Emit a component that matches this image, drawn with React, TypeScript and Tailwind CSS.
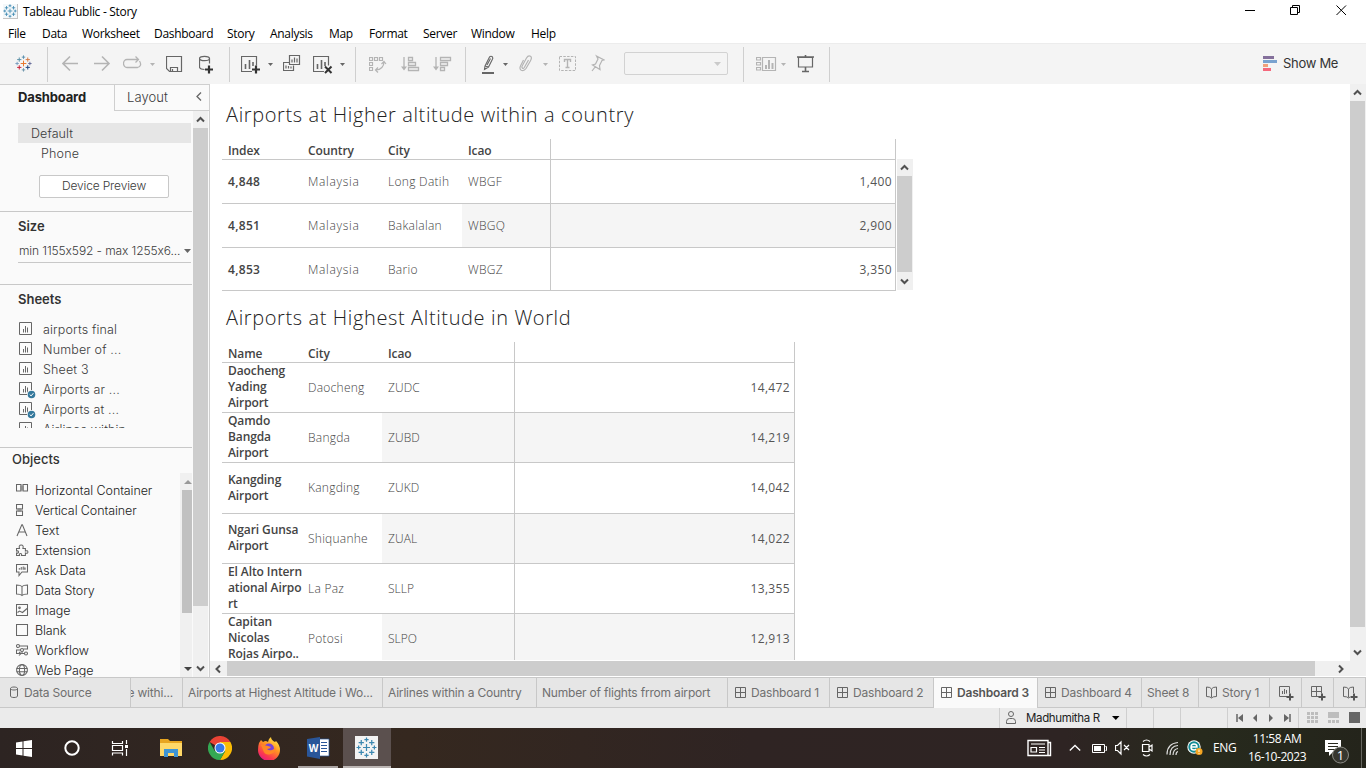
import React from "react";

type Kids = { children?: React.ReactNode };

const Svg = ({ w, h, children, className = "" }: { w: number; h: number; className?: string } & Kids) => (
  <svg width={w} height={h} viewBox={`0 0 ${w} ${h}`} fill="none" className={`block shrink-0 ${className}`}>
    {children}
  </svg>
);

const Chevron = ({ dir, color = "#505050" }: { dir: "up" | "down" | "left" | "right"; color?: string }) => {
  const d = {
    up: "M4 10.500 7.500 7l3.500 3.500",
    down: "M4 6.500 7.500 10l3.500-3.500",
    left: "M10 4.500 6.500 8 10 11.500",
    right: "M6 4.500 9.500 8 6 11.500",
  }[dir];
  return (
    <Svg w={16} h={17}>
      <path d={d} stroke={color} strokeWidth="2" />
    </Svg>
  );
};

const Sparkle = ({ size, mono }: { size: number; mono?: boolean }) => {
  const blue = "#3b87b0";
  const pts: [number, number, number, string][] = [
    [12, 12, 4, "#e8762c"],
    [12, 3, 2.4, "#5c92b0"],
    [12, 21, 2.4, "#7098ad"],
    [3, 12, 2.4, "#7b9fc0"],
    [21, 12, 2.4, "#6a6f9c"],
    [6, 6.5, 3, "#5c92a8"],
    [18, 6.5, 3, "#d77a45"],
    [6, 17.5, 3, "#c72037"],
    [18, 17.5, 3, "#1f447e"],
  ];
  return (
    <svg width={size} height={size} viewBox="0 0 24 24" fill="none" className="block shrink-0">
      {pts.map(([x, y, r, c], i) => (
        <path key={i} d={`M${x - r} ${y}h${r * 2}M${x} ${y - r}v${r * 2}`} stroke={mono ? blue : c} strokeWidth="1.4" />
      ))}
    </svg>
  );
};

/* ---------- window header ---------- */

const menus: [string, string][] = [
  ["File", "w-[34px]"],
  ["Data", "w-[40px]"],
  ["Worksheet", "w-[72px]"],
  ["Dashboard", "w-[73px]"],
  ["Story", "w-[43px]"],
  ["Analysis", "w-[59px]"],
  ["Map", "w-[40px]"],
  ["Format", "w-[54px]"],
  ["Server", "w-[48px]"],
  ["Window", "w-[60px]"],
  ["Help", "w-[40px]"],
];

const TitleBar = () => (
  <div className="flex h-6 items-start bg-white">
    <div className="ml-[3px] mt-1 flex h-[15px] w-[15px] items-center justify-center border-b border-r border-[#c4c4c4] bg-[#f4f8fa]">
      <Sparkle size={14} mono />
    </div>
    <span className="ml-[5px] mt-[3px] grow whitespace-nowrap text-[12px] leading-[18px] tracking-[-0.3px] text-black">Tableau Public - Story</span>
    <Svg w={121} h={22}>
      <path d="M0 10.500h10M45.500 7.500h7v7h-7zM47.500 7.500v-2h7v7h-2M91.500 5.500l9.500 9.500M101 5.500l-9.500 9.500" stroke="#000" strokeWidth="1" />
    </Svg>
  </div>
);

const MenuBar = () => (
  <div className="flex h-[19px] bg-white pl-2">
    {menus.map(([m, w]) => (
      <span key={m} className={`${w} whitespace-nowrap text-[12px] leading-[19px] tracking-[-0.3px] text-black`}>
        {m}
      </span>
    ))}
  </div>
);

/* ---------- toolbar ---------- */

const DK = "#666666";
const LT = "#b4b4b4";
const Slot = ({ w, children }: { w: string } & Kids) => <div className={`${w} shrink-0 pt-2`}>{children}</div>;
const Sep = ({ w }: { w: string }) => (
  <div className={`${w} shrink-0 pt-[3px]`}>
    <div className="h-[35px] w-px bg-[#cfcfcf]" />
  </div>
);
const Caret = ({ w, c }: { w: string; c: string }) => (
  <Slot w={w}>
    <Svg w={6} h={24}>
      <path d="M0 11h5L2.500 14z" fill={c} />
    </Svg>
  </Slot>
);

const Toolbar = () => (
  <div className="flex h-[41px] border-t border-[#ececec] bg-[#f4f4f4] pl-[15px]">
    <div className="w-8 shrink-0 pt-[11px]">
      <Sparkle size={17} />
    </div>
    <Sep w="w-[15px]" />
    <Slot w="w-8">
      <Svg w={17} h={24}>
        <path d="M16 11.500H1M8 4.500l-7 7 7 7" stroke={LT} strokeWidth="1.6" />
      </Svg>
    </Slot>
    <Slot w="w-[29px]">
      <Svg w={17} h={24}>
        <path d="M0 11.500h15M8 4.500l7 7-7 7" stroke={LT} strokeWidth="1.6" />
      </Svg>
    </Slot>
    <Slot w="w-[27px]">
      <Svg w={19} h={24}>
        <path d="M11.500 15.500H4a3.500 4 0 0 1 0-8h11M16.500 9q3 5-2 6.500H9M12.500 4.500l3 3-3 3" stroke={LT} strokeWidth="1.3" />
      </Svg>
    </Slot>
    <Caret w="w-4" c={LT} />
    <Slot w="w-[33px]">
      <Svg w={17} h={24}>
        <path d="M.5 4.500h15v15H3.500l-3-3zM4.500 19.500v-4h7v4M6.500 17v2" stroke={DK} strokeWidth="1.200" />
      </Svg>
    </Slot>
    <Slot w="w-[30px]">
      <Svg w={16} h={24}>
        <ellipse cx="5.500" cy="6.500" rx="5" ry="2.200" stroke={DK} strokeWidth="1.200" />
        <path d="M.5 6.500v9q1 2 5 2M10.500 6.500v5" stroke={DK} strokeWidth="1.200" />
        <path d="M6 17.500h8M10 13.500v8" stroke="#333" strokeWidth="2.200" />
      </Svg>
    </Slot>
    <Sep w="w-3" />
    <Slot w="w-[27px]">
      <Svg w={20} h={24}>
        <path d="M11 19.500H.5v-15h15v9" stroke={DK} strokeWidth="1.200" />
        <path d="M4.500 12v5M8.500 8v9M12 10v4" stroke={DK} strokeWidth="1.600" />
        <path d="M11 17.500h8M15 13.500v8" stroke="#333" strokeWidth="2.200" />
      </Svg>
    </Slot>
    <Caret w="w-[15px]" c={DK} />
    <Slot w="w-[30px]">
      <Svg w={18} h={24}>
        <path d="M6.500 3.500h10v9h-10zM6 10.500H.5v8h10v-5M3 13.500v3M5.500 14v2.500M8 14.500v2M9 7.500v3M11.500 5.500v5M14 6.500v4" stroke={DK} strokeWidth="1.200" />
      </Svg>
    </Slot>
    <Slot w="w-[27px]">
      <Svg w={20} h={24}>
        <path d="M11 19.500H.5v-15h15v9" stroke={DK} strokeWidth="1.200" />
        <path d="M4.500 12v5M8.500 8v9M12 10v4" stroke={DK} strokeWidth="1.600" />
        <path d="m12 14.500 6.500 6.500M18.500 14.500 12 21" stroke="#333" strokeWidth="2" />
      </Svg>
    </Slot>
    <Caret w="w-[15px]" c={DK} />
    <Sep w="w-[14px]" />
    <Slot w="w-8">
      <Svg w={18} h={24}>
        <path d="M.5 5.500h3v3h-3zM5.500 5.500h3v3h-3zM10.500 5.500h3v3h-3zM.5 10.500h3v3h-3zM.5 15.500h3v3h-3zM7 18c5 0 8-4 8-8M12.500 12l2.500-2.500 2 2.500M9 15.500 6.500 18 9 20.500" stroke={LT} strokeWidth="1.200" />
      </Svg>
    </Slot>
    <Slot w="w-8">
      <Svg w={19} h={24}>
        <path d="M3 5v12M7.500 5.500h4v3h-4zM7.500 10.500h7v3h-7zM7.500 15.500h10v3h-10z" stroke={LT} strokeWidth="1.300" />
        <path d="M0 14.500h6l-3 4z" fill={LT} />
      </Svg>
    </Slot>
    <Slot w="w-8">
      <Svg w={19} h={24}>
        <path d="M3 5v12M7.500 5.500h10v3h-10zM7.500 10.500h7v3h-7zM7.500 15.500h4v3h-4z" stroke={LT} strokeWidth="1.300" />
        <path d="M0 14.500h6l-3 4z" fill={LT} />
      </Svg>
    </Slot>
    <Sep w="w-[17px]" />
    <Slot w="w-[21px]">
      <Svg w={13} h={24}>
        <path d="m3 14 4.500-9q1.500-1.500 3 0 .8 1-.2 2.500L6.500 15l-4 2.500zM3 14l3.500 1M8.500 6.500 5 13" stroke={DK} strokeWidth="1.100" />
        <path d="M0 21h12" stroke={DK} strokeWidth="2" />
      </Svg>
    </Slot>
    <Caret w="w-4" c={DK} />
    <Slot w="w-6">
      <Svg w={14} h={24}>
        <path d="m9.500 8-4.200 7.500q-1 1.500-2 .5-.8-1 0-2.300L7.500 6q1.800-3 4-1.700 1.800 1.400 0 4.400L7 16.500q-2.200 3-4.800 1.700-2.200-1.500-.5-4.700L4.500 8" stroke={LT} strokeWidth="1.200" />
      </Svg>
    </Slot>
    <Caret w="w-4" c={LT} />
    <Slot w="w-8">
      <Svg w={18} h={24}>
        <rect x=".5" y="4.500" width="16" height="14" stroke={LT} strokeDasharray="2.500 1.300" />
        <path d="M5.500 10V7.500h6V10M8.500 7.500v8M6.500 15.500h4" stroke={LT} strokeWidth="1.400" />
      </Svg>
    </Slot>
    <Slot w="w-[33px]">
      <Svg w={14} h={24}>
        <path d="m5.500 4 7.500 4-2 .5-2.500 5 .5 4-7.500-4.500 3-1L7 7zM4.500 14.500 1 19" stroke={LT} strokeWidth="1.200" />
      </Svg>
    </Slot>
    <div className="w-[119px] shrink-0 pt-[8px]">
      <div className="flex h-[23px] w-[104px] items-center justify-end rounded-[2px] border border-[#d2d2d2] pr-[5px]">
        <Svg w={8} h={4}>
          <path d="M0 0h7L3.500 4z" fill="#cacaca" />
        </Svg>
      </div>
    </div>
    <Sep w="w-[13px]" />
    <Slot w="w-[25px]">
      <Svg w={21} h={24}>
        <path d="M.5 5.500h4v2.500h-4zM.5 10.500h4v2.500h-4zM.5 15.500h4V18h-4zM6.500 5.500h13v13h-13z" stroke={LT} strokeWidth="1.200" />
        <path d="M10 13v4M13 8v9M16.500 11v6" stroke={LT} strokeWidth="2" />
      </Svg>
    </Slot>
    <Caret w="w-4" c={LT} />
    <Slot w="w-8">
      <Svg w={18} h={24}>
        <path d="M0 5h17M8.500 3v2M8.500 15v5M5 19.500h7" stroke={DK} strokeWidth="1.600" />
        <path d="M1.500 5.500h14v9.500h-14z" stroke={DK} strokeWidth="1.200" />
      </Svg>
    </Slot>
    <Sep w="w-[434px]" />
    <Slot w="w-5">
      <Svg w={15} h={24}>
        <path d="M0 4h11v3H0z" fill="#84709b" />
        <path d="M0 8h14v3H0z" fill="#79a2cf" />
        <path d="M0 12h5v3H0z" fill="#f0a07a" />
        <path d="M0 16h8v3H0z" fill="#f5687c" />
      </Svg>
    </Slot>
    <span className="whitespace-nowrap font-['Inter','Liberation_Sans',sans-serif] text-[13px] leading-[39px] tracking-[-0.3px] text-[#333]">Show Me</span>
  </div>
);

/* ---------- left panel ---------- */

const sheets: [string, boolean][] = [
  ["airports final", false],
  ["Number of ...", false],
  ["Sheet 3", false],
  ["Airports ar ...", true],
  ["Airports at ...", true],
  ["Airlines within", false],
];

const SheetIcon = ({ used }: { used: boolean }) => (
  <Svg w={17} h={17}>
    <path d="M.5.500h12v12H.500z" stroke={DK} />
    <path d="M4.500 7v3.500M6.500 4v6.500M8.500 5.500v5" stroke={DK} />
    {used && (
      <>
        <circle cx="12.500" cy="12.500" r="4.500" fill="#fafafa" />
        <circle cx="12.500" cy="12.500" r="3.800" fill="#34789c" />
        <path d="m10.700 12.500 1.400 1.400 2.300-2.700" stroke="#fff" />
      </>
    )}
  </Svg>
);

const objects: [string, React.ReactNode][] = [
  ["Horizontal Container", <g key="a"><path d="M4 1.500h4v5H4z" fill="#bbb" stroke="none" /><path d="M.5.500h4.500v6.500h-4.500zM7 .500h4.500v6.500h-4.500z" /></g>],
  ["Vertical Container", <g key="b"><path d="M1.500 4h4v4h-4z" fill="#bbb" stroke="none" /><path d="M.5.500h6v4.500h-6zM.5 7h6v4.500h-6z" /></g>],
  ["Text", <path key="c" d="M1 12 5.800.8h.6L11 12M2.800 8h6.500" />],
  ["Extension", <path key="d" d="M.5 4.500h3q-1-3.500 1.700-3.500t1.700 3.500h2.500v2.500q2.500-1 2.500 1t-2.500 1v2.500H5.500q.5-2-1-2t-1 2h-3V9q2 .5 2-1t-2-1z" />],
  ["Ask Data", <g key="e"><path d="M.5.500h11v7.500H6L3 11.500V8H.500z" /><path d="M3.500 5.800V4M5.500 5.800V3M7.500 5.800V2.500M9 5.800V3.500" strokeWidth="1.500" stroke="#888" /></g>],
  ["Data Story", <path key="f" d="M6 2.500v8.500M6 2.500Q4.500 1 .5 1v9q4 0 5.500 1.500Q7.500 10 11.500 10V1Q7.500 1 6 2.500" />],
  ["Image", <g key="g"><path d="M.5.500h11v11H.500z" /><path d="m1.500 8.500 2-1.500 3 1.500 4.500-4" /><circle cx="3.500" cy="3.800" r=".8" /></g>],
  ["Blank", <path key="h" d="M.5.500h11v11H.500z" />],
  ["Workflow", <g key="i"><circle cx="2" cy="2" r="1.500" /><circle cx="6" cy="6" r="1.500" /><circle cx="10" cy="9.500" r="1.500" /><path d="M3.500 2h8v3H7.500M4.500 6H.500v3.500h4M6 7.500v2h2.500M3 8l2 1.500L3 11.500" /></g>],
  ["Web Page", <g key="j"><circle cx="6" cy="6" r="5.400" /><ellipse cx="6" cy="6" rx="2.600" ry="5.400" /><path d="M.5 4.500h11M.5 7.800h11" /></g>],
];

const SidePanel = () => (
  <div className="flex h-[593px] w-[210px] shrink-0 flex-col border-r border-t border-[#cfcfcf] bg-[#fafafa] font-['Inter','Liberation_Sans',sans-serif] text-[#3a3a3a]">
    <div className="flex h-[26px] shrink-0">
      <div className="w-[114px] pl-[18px] text-[13px] font-bold leading-[25px] tracking-[-0.15px] text-[#222]">Dashboard</div>
      <div className="flex grow border-b border-l border-[#cfcfcf] pl-3 text-[13px] leading-[25px]">
        <span className="w-[65px] font-light tracking-[0.1px]">Layout</span>
        <Svg w={14} h={24}>
          <path d="M9 7.500 5 11.500l4 4" stroke="#666" strokeWidth="1.300" />
        </Svg>
      </div>
    </div>
    <div className="flex min-h-0 grow">
      <div className="flex w-[192px] shrink-0 flex-col">
        <div className="h-[101px] shrink-0 border-b border-[#c8c8c8] pl-[18px] pt-3">
          <div className="h-5 w-[173px] bg-[#e6e6e6] pl-[13px] text-[12.500px] font-light leading-[21px] tracking-[0.1px]">Default</div>
          <div className="h-5 pl-[23px] text-[12.500px] font-light leading-[21px] tracking-[0.2px]">Phone</div>
          <div className="ml-[21px] mt-3 flex h-[23px] w-[130px] items-center justify-center rounded-[2px] border border-[#c8c8c8] bg-white pb-[2px] text-[12px] font-light tracking-[-0.15px]">Device Preview</div>
        </div>
        <div className="h-[73px] shrink-0 border-b border-[#c8c8c8] pl-[18px] pt-1">
          <div className="h-5 text-[13px] font-semibold leading-5 text-[#333]">Size</div>
          <div className="mt-1 flex h-[23px] w-[173px] items-center justify-between border-b border-[#c8c8c8] pl-px">
            <span className="whitespace-nowrap text-[12px] font-light tracking-[-0.1px]">min 1155x592 - max 1255x6...</span>
            <Svg w={7} h={5}>
              <path d="M0 0h7L3.500 4z" fill="#666" />
            </Svg>
          </div>
        </div>
        <div className="h-[163px] shrink-0 border-b border-[#c8c8c8] pl-[18px] pt-1">
          <div className="h-5 text-[13px] font-semibold leading-[21px] text-[#333]">Sheets</div>
          <div className="mt-[10px] h-[109px] overflow-hidden">
            {sheets.map(([s, used]) => (
              <div key={s} className="flex h-5 items-start">
                <div className="w-[25px] pl-px pt-[3px]">
                  <SheetIcon used={used} />
                </div>
                <span className="whitespace-nowrap text-[12.500px] font-light leading-[21px] tracking-[0.15px]">{s}</span>
              </div>
            ))}
          </div>
        </div>
        <div className="flex h-[25px] shrink-0 items-center pb-px pl-3 text-[13px] font-medium text-[#333]">Objects</div>
        <div className="flex min-h-0 grow">
          <div className="w-[180px] overflow-hidden pl-4 pt-[7px]">
            {objects.map(([o, icon]) => (
              <div key={o} className="flex h-5 items-start">
                <Svg w={19} h={20}>
                  <g transform="translate(0 4)" stroke={DK} strokeWidth="1.050">
                    {icon}
                  </g>
                </Svg>
                <span className="whitespace-nowrap text-[12.500px] font-light leading-[21px] tracking-[-0.1px] text-[#222]">{o}</span>
              </div>
            ))}
          </div>
          <div className="flex w-3 flex-col items-end bg-[#f0f0f0]">
            <Svg w={10} h={17}>
              <path d="M2 11h8L6 7z" fill="#999" />
            </Svg>
            <div className="h-[123px] w-[10px] bg-[#c1c1c1]" />
            <div className="grow" />
            <Svg w={10} h={17}>
              <path d="M2 7h8l-4 4z" fill="#444" />
            </Svg>
          </div>
        </div>
      </div>
      <div className="ml-px flex w-[15px] flex-col bg-[#f0f0f0]">
        <Chevron dir="up" />
        <div className="h-[478px] bg-[#cdcdcd]" />
        <div className="grow" />
        <Chevron dir="down" />
      </div>
    </div>
  </div>
);

/* ---------- dashboard canvas ---------- */

const headCell = "shrink-0 pl-[6px] text-[12px] font-semibold tracking-[-0.1px] text-[#444]";

const TableOne = () => (
  <div className="flex">
    <div className="w-[674px]">
      <div className="flex h-[21px] border-b border-[#c8c8c8] leading-[24px]">
        <div className={`${headCell} w-20`}>Index</div>
        <div className={`${headCell} w-20`}>Country</div>
        <div className={`${headCell} w-20`}>City</div>
        <div className={`${headCell} w-[88px]`}>Icao</div>
        <div className="grow border-x border-[#c8c8c8]" />
      </div>
      {[
        ["4,848", "Long Datih", "WBGF", "1,400"],
        ["4,851", "Bakalalan", "WBGQ", "2,900"],
        ["4,853", "Bario", "WBGZ", "3,350"],
      ].map(([index, city, icao, value], i) => (
        <div key={index} className={`flex border-b border-[#c8c8c8] text-[12px] font-light leading-[43px] text-[#444] ${i === 2 ? "h-[43px]" : "h-11"}`}>
          <div className="w-20 shrink-0 pl-[6px] font-semibold tracking-[0.3px] text-[#444]">{index}</div>
          <div className="w-20 shrink-0 pl-[6px] tracking-[0.7px]">Malaysia</div>
          <div className="w-20 shrink-0 whitespace-nowrap pl-[6px] tracking-[0.3px]">{city}</div>
          <div className={`w-[88px] shrink-0 pl-[6px] tracking-[0.3px] ${i === 1 ? "bg-[#f5f5f5]" : ""}`}>{icao}</div>
          <div className={`grow border-x border-[#c8c8c8] pr-[3px] text-right font-normal tracking-[0.4px] text-[#555] ${i === 1 ? "bg-[#f5f5f5]" : ""}`}>{value}</div>
        </div>
      ))}
    </div>
    <div className="ml-px mt-5 flex h-[131px] w-4 flex-col bg-[#f0f0f0]">
      <Chevron dir="up" />
      <div className="h-24 w-[15px] bg-[#cdcdcd]" />
      <div className="grow" />
      <Chevron dir="down" />
    </div>
  </div>
);

const world: { name: string[]; city: string; icao: string; value: string; h: string }[] = [
  { name: ["Daocheng", "Yading", "Airport"], city: "Daocheng", icao: "ZUDC", value: "14,472", h: "h-[50px]" },
  { name: ["Qamdo", "Bangda", "Airport"], city: "Bangda", icao: "ZUBD", value: "14,219", h: "h-[50px]" },
  { name: ["Kangding", "Airport"], city: "Kangding", icao: "ZUKD", value: "14,042", h: "h-[51px]" },
  { name: ["Ngari Gunsa", "Airport"], city: "Shiquanhe", icao: "ZUAL", value: "14,022", h: "h-[50px]" },
  { name: ["El Alto Intern", "ational Airpo", "rt"], city: "La Paz", icao: "SLLP", value: "13,355", h: "h-[50px]" },
  { name: ["Capitan", "Nicolas", "Rojas Airpo.."], city: "Potosi", icao: "SLPO", value: "12,913", h: "h-[50px]" },
];

const TableTwo = () => (
  <div className="w-[573px]">
    <div className="flex h-[21px] border-b border-[#c8c8c8] leading-[24px]">
      <div className={`${headCell} w-20`}>Name</div>
      <div className={`${headCell} w-20`}>City</div>
      <div className={`${headCell} w-[132px]`}>Icao</div>
      <div className="grow border-x border-[#c8c8c8]" />
    </div>
    {world.map((r, i) => (
      <div key={r.icao} className={`flex border-b border-[#c8c8c8] text-[12px] font-light leading-[50px] text-[#444] ${r.h}`}>
        <div className="flex w-20 shrink-0 flex-col justify-center whitespace-nowrap pb-px pl-[6px] font-semibold leading-4 tracking-[-0.1px] text-[#444]">
          {r.name.map((n) => (
            <span key={n}>{n}</span>
          ))}
        </div>
        <div className="w-20 shrink-0 pl-[6px] tracking-[0.25px]">{r.city}</div>
        <div className={`w-[132px] shrink-0 pl-[6px] tracking-[0.050px] ${i % 2 ? "bg-[#f5f5f5]" : ""}`}>{r.icao}</div>
        <div className={`grow border-x border-[#c8c8c8] pr-[4px] text-right font-normal tracking-[0.35px] text-[#555] ${i % 2 ? "bg-[#f5f5f5]" : ""}`}>{r.value}</div>
      </div>
    ))}
  </div>
);

const Canvas = () => (
  <div className="flex h-[593px] grow flex-col bg-white">
    <div className="flex h-[577px]">
      <div className="h-[576px] grow overflow-hidden pl-3 font-['Open_Sans','Noto_Sans',sans-serif]">
        <h1 className="h-[55px] whitespace-nowrap pl-1 pt-[15px] text-[20px] font-light leading-8 tracking-[0.62px] text-[#222]">Airports at Higher altitude within a country</h1>
        <TableOne />
        <h1 className="h-[51px] whitespace-nowrap pl-1 pt-[11px] text-[20px] font-light leading-8 tracking-[0.62px] text-[#222]">Airports at Highest Altitude in World</h1>
        <TableTwo />
      </div>
      <div className="flex w-4 flex-col bg-[#f0f0f0]">
        <Chevron dir="up" />
        <div className="h-[526px] w-[15px] bg-[#cdcdcd]" />
        <div className="grow" />
        <Chevron dir="down" />
      </div>
    </div>
    <div className="flex h-[15px] bg-[#f0f0f0]">
      <div className="w-[17px]">
        <Chevron dir="left" />
      </div>
      <div className="w-[1088px] bg-[#cdcdcd]" />
      <div className="w-[18px]" />
      <Chevron dir="right" />
    </div>
  </div>
);

/* ---------- bottom bars ---------- */

const GridIcon = () => (
  <Svg w={16} h={12} className="ml-[2px]">
    <path d="M.5.500h10v10H.500zM5.500.500v10M.500 5.500h10" stroke={DK} />
  </Svg>
);
const BookIcon = ({ plus }: { plus?: boolean }) => (
  <Svg w={16} h={16} className="ml-[2px]">
    <path d="M5.500 4v8.500M5.500 4Q4.500 2 .500 2v9.500q4 0 5 1.500 1-1.500 5-1.500V2q-4 0-5 2" stroke={DK} />
    {plus && <path d="M7 12h8M11 8v8" stroke="#e6e6e6" strokeWidth="4" />}
    {plus && <path d="M7.500 12h7M11 8.500v7" stroke="#555" strokeWidth="2" />}
  </Svg>
);

const Tab = ({ w, active, children }: { w: string; active?: boolean } & Kids) => (
  <div
    className={`${w} flex shrink-0 items-center overflow-hidden whitespace-nowrap border-r border-[#c8c8c8] pl-[5px] ${
      active ? "bg-[#fafafa] pb-px text-[12px] font-semibold text-[#555]" : "border-b bg-[#e6e6e6] text-[12px] text-[#707070]"
    }`}
  >
    {children}
  </div>
);

const SheetTabs = () => (
  <div className="flex h-[31px] border-t border-[#c8c8c8] bg-[#e6e6e6] font-['Inter','Liberation_Sans',sans-serif] tracking-[-0.19px]">
    <Tab w="w-[131px]">
      <Svg w={14} h={14} className="ml-[5px]">
        <path d="M.5 2.500v7.500c0 2 7 2 7 0V2.500c0-2-7-2-7 0s7 2 7 0" stroke={DK} />
      </Svg>
      Data Source
    </Tab>
    <div className="flex w-[52px] shrink-0 items-center justify-end overflow-hidden whitespace-nowrap border-b border-r border-[#c8c8c8] pr-[9px] text-[12px] text-[#707070]">e withi...</div>
    <Tab w="w-[200px]">Airports at Highest Altitude i Wo...</Tab>
    <Tab w="w-[154px]">Airlines within a Country</Tab>
    <Tab w="w-[191px]">Number of flights frrom airport</Tab>
    <Tab w="w-[102px]"><GridIcon />Dashboard 1</Tab>
    <Tab w="w-[104px]"><GridIcon />Dashboard 2</Tab>
    <Tab w="w-[104px]" active><GridIcon />Dashboard 3</Tab>
    <Tab w="w-[104px]"><GridIcon />Dashboard 4</Tab>
    <Tab w="w-[57px]">Sheet 8</Tab>
    <Tab w="w-[71px]"><BookIcon />Story 1</Tab>
    <Tab w="w-8">
      <Svg w={18} h={16} className="ml-[4px]">
        <path d="M8.500 11.500H.500v-10h10v7M3.500 6v3M5.500 4v5M7.500 5v3.500" stroke={DK} />
        <path d="M7.500 12h7M11 8.500v7" stroke="#555" strokeWidth="2" />
      </Svg>
    </Tab>
    <Tab w="w-8">
      <Svg w={18} h={16} className="ml-[4px]">
        <path d="M8 11.500H.500v-10h10v7M5.500 1.500v10M.500 6.500h10" stroke={DK} />
        <path d="M7.500 12h7M11 8.500v7" stroke="#555" strokeWidth="2" />
      </Svg>
    </Tab>
    <Tab w="w-8">
      <div className="ml-[2px]">
        <BookIcon plus />
      </div>
    </Tab>
  </div>
);

const StatusBar = () => (
  <div className="flex h-5 bg-[#ebebeb] pl-[999px] font-['Inter','Liberation_Sans',sans-serif]">
    <div className="flex w-[127px] items-center border-l border-[#cfcfcf] pl-[6px]">
      <Svg w={20} h={16}>
        <circle cx="5" cy="4" r="2.500" stroke={DK} />
        <path d="M.5 13.500v-2q0-3 3-3h3q3 0 3 3v2z" stroke={DK} />
      </Svg>
      <span className="w-[86px] whitespace-nowrap pt-px text-[11.500px] tracking-[-0.360px] text-[#222]">Madhumitha R</span>
      <Svg w={8} h={5}>
        <path d="M0 0h7.500L3.800 4z" fill="#000" />
      </Svg>
    </div>
    <div className="w-[27px] border-l border-[#cfcfcf]" />
    <div className="w-[27px] border-l border-[#cfcfcf]" />
    <div className="w-[47px] border-l border-[#cfcfcf]" />
    <div className="w-[71px] border-l border-[#cfcfcf] pl-2">
      <Svg w={56} h={20}>
        <path d="M1 6v8M54 6v8" stroke={DK} strokeWidth="1.500" />
        <path d="M7 6v8l-5-4zM21 6v8l-4-4zM33 6v8l4-4zM48 6v8l5-4z" fill={DK} />
      </Svg>
    </div>
    <div className="border-l border-[#cfcfcf] pl-2">
      <Svg w={56} h={20}>
        <path d="M0 4h3v3H0zM4 4h3v3H4zM8 4h3v3H8zM0 8h3v3H0zM4 8h3v3H4zM8 8h3v3H8zM0 12h3v3H0zM4 12h3v3H4zM8 12h3v3H8zM21 4h11v6H21zM21 12h3v3h-3zM25 12h3v3h-3zM29 12h3v3h-3z" fill="#bdbdbd" />
        <path d="M42 4h11v11H42z" fill="#666" />
      </Svg>
    </div>
  </div>
);

const Taskbar = () => (
  <div className="flex h-10 bg-[linear-gradient(90deg,#2d2422_0%,#35281f_30%,#2f2423_55%,#2e2423_78%,#272a1d_88%,#24241b_100%)] text-white">
    <div className="flex w-12 items-center pl-4">
      <Svg w={17} h={17}>
        <path d="M0 2.500 6.500 1.500V8H0zM7.500 1.300 16 0v8H7.500zM0 9h6.500v6.500L0 14.500zM7.500 9H16v8l-8.500-1.300z" fill="#fff" />
      </Svg>
    </div>
    <div className="flex w-12 items-center justify-center">
      <Svg w={18} h={18}>
        <circle cx="9" cy="9" r="6.700" stroke="#fff" strokeWidth="2" />
      </Svg>
    </div>
    <div className="flex w-12 items-center justify-center">
      <Svg w={18} h={18}>
        <path d="M1.500 2v2.500h10V2M1.500 16.500V14h10v2.500M1.500 6.500h10v5h-10zM15.500 1v4M15.500 10v7" stroke="#fff" strokeWidth="1.200" />
        <path d="M14 6h3v3h-3z" fill="#fff" />
      </Svg>
    </div>
    <div className="flex w-[53px] items-center pl-4">
      <Svg w={23} h={20}>
        <path d="M0 1h8l2 2h12v15H0z" fill="#e8a520" />
        <path d="M0 5h22v13H0z" fill="#ffd868" />
        <path d="M4 11h14v8h-4v-4H8v4H4z" fill="#3f95d4" />
      </Svg>
    </div>
    <div className="flex w-[46px] items-center justify-center">
      <Svg w={24} h={24}>
        <path d="M12 12 1.600 6A12 12 0 0 1 22.400 6z" fill="#ea4335" />
        <path d="M12 12V6h10.400A12 12 0 0 1 12 24l5.200-9z" fill="#fbbc05" />
        <path d="M12 12l5.200 3L12 24A12 12 0 0 1 1.600 6l5.200 9z" fill="#34a853" />
        <circle cx="12" cy="12" r="5.500" fill="#fff" />
        <circle cx="12" cy="12" r="4.500" fill="#3979e8" />
      </Svg>
    </div>
    <div className="flex w-[55px] items-center pl-[14px]">
      <Svg w={24} h={24}>
        <defs>
          <linearGradient id="fx" x1=".8" y1="0" x2=".2" y2="1">
            <stop offset="0" stopColor="#fff04a" />
            <stop offset=".4" stopColor="#ff9422" />
            <stop offset=".75" stopColor="#fb3a4e" />
            <stop offset="1" stopColor="#e3168a" />
          </linearGradient>
        </defs>
        <path d="M2 7 4 4l2 2 2-1q2 0 3 1 0-3 3-5 0 3 4 5l1-1q4 4 4 9a11 11 0 0 1-22 0q0-4 1-7z" fill="url(#fx)" />
        <circle cx="12" cy="12.500" r="5" fill="#7542d8" />
        <path d="M4 9q4 0 7 1l3 1q-1 2-4 2 2 2 5 1 3-1 3-4 2 6-4 8t-8-4q-1-3-2-5z" fill="#ff8826" />
      </Svg>
    </div>
    <div className="flex w-10 flex-col">
      <div className="flex h-[38px] items-center pl-[9px] pt-[2px]">
        <Svg w={23} h={22}>
          <path d="M11 2h11v17H11z" fill="#fff" stroke="#2a5699" strokeWidth=".700" />
          <path d="M14 5.500h6M14 8.500h6M14 11.500h6M14 14.500h6" stroke="#2a5699" strokeWidth="1.200" />
          <path d="M0 2 13 0v22L0 19.500z" fill="#2a5699" />
          <text x="6.500" y="15" fill="#fff" fontSize="10" fontWeight="700" textAnchor="middle">W</text>
        </Svg>
      </div>
      <div className="h-[2px] bg-[#aaa4a2]" />
    </div>
    <div className="ml-[5px] flex w-12 flex-col bg-[#5b504e]">
      <div className="flex h-[38px] items-center pl-3 pt-[1px]">
        <div className="flex h-[23px] w-[23px] items-center justify-center bg-[#f3f3f3]">
          <Sparkle size={21} mono />
        </div>
      </div>
      <div className="h-[2px] bg-[#bcb6b4]" />
    </div>
    <div className="flex grow items-start justify-end pt-2">
      <div className="w-[42px]">
        <Svg w={25} h={24}>
          <path d="M1 4.500h20v15H1zM21 6.500h2.500v13H20" stroke="#fff" strokeWidth="1.400" />
          <path d="M4 8h14M12 11.500h6M12 14h6M12 16.500h6M4 11.500h5.500v4.500H4z" stroke="#fff" strokeWidth="1.200" />
        </Svg>
      </div>
      <div className="w-[23px]">
        <Svg w={13} h={24}>
          <path d="m.8 14.500 5.200-5 5.200 5" stroke="#fff" strokeWidth="1.300" />
        </Svg>
      </div>
      <div className="w-[23px]">
        <Svg w={16} h={24}>
          <path d="M.5 8.500h12v8H.500zM13.500 10.500h1v4h-1" stroke="#fff" />
          <path d="M2 10h7v5H2z" fill="#fff" />
        </Svg>
      </div>
      <div className="w-[26px]">
        <Svg w={15} h={24}>
          <path d="M.500 9.500h2l3.500-3.500v12l-3.500-3.500h-2zM9 9l5 5M14 9l-5 5" stroke="#fff" strokeWidth="1.200" />
        </Svg>
      </div>
      <div className="w-[25px]">
        <Svg w={13} h={24}>
          <path d="M1.500 8.500h6.500v7H1.500zM8 11l3-2v6l-3-2M2 5.500q3.500-3 7 0M2 18.500q3.500 3 7 0" stroke="#fff" strokeWidth="1.200" />
        </Svg>
      </div>
      <div className="w-[21px]">
        <Svg w={14} h={24}>
          <path d="M1 18.500Q1 7.500 12 6.500M4 19q0-9 8-9.500M7 19q.3-6 5-6.500M10 19q0-3 2-3.500" stroke="#ddd" strokeWidth="1.200" />
        </Svg>
      </div>
      <div className="w-[26px]">
        <Svg w={17} h={24}>
          <circle cx="7" cy="11" r="6.700" fill="#fff" />
          <circle cx="7" cy="11" r="5.700" fill="#138a94" />
          <path d="M4.500 11h5.500q0-3-3-3t-3 3.200q0 2.800 3 2.800 1.500 0 2.500-1" stroke="#fff" strokeWidth="1.500" />
          <circle cx="12" cy="15.500" r="3.500" fill="#f5a623" />
          <path d="M12 13.500v2.500M12 17v.8" stroke="#fff" />
        </Svg>
      </div>
      <span className="w-[34px] text-[12px] leading-6 tracking-[-0.3px]">ENG</span>
      <div className="-mt-2 w-[60px] whitespace-nowrap pt-[2px] text-center text-[12px] leading-[18px] tracking-[-0.45px]">
        <div>11:58 AM</div>
        <div>16-10-2023</div>
      </div>
      <div className="ml-[18px] w-[36px]">
        <Svg w={26} h={30}>
          <path d="M0 4h16v12H8l-4 4v-4H0z" fill="#fff" />
          <path d="M3 7.500h10M3 10.500h10M3 13.500h7" stroke="#2a2a20" />
          <circle cx="15.500" cy="19" r="8" fill="#37372f" stroke="#8c8c86" />
          <text x="15.500" y="23.500" fill="#fff" className="text-[13px]" textAnchor="middle">1</text>
        </Svg>
      </div>
      <div className="-mt-2 h-10 w-[5px] border-l border-[#66665f]" />
    </div>
  </div>
);

export default function App() {
  return (
    <div className="flex h-[768px] w-[1366px] flex-col overflow-hidden bg-white font-['Open_Sans','Noto_Sans',sans-serif]">
      <TitleBar />
      <MenuBar />
      <Toolbar />
      <div className="flex h-[593px]">
        <SidePanel />
        <Canvas />
      </div>
      <SheetTabs />
      <StatusBar />
      <Taskbar />
    </div>
  );
}
